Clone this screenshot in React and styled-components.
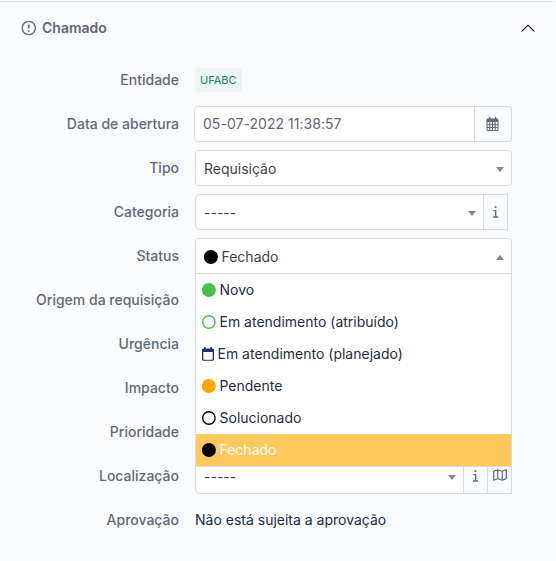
import React from "react";
import styled, { createGlobalStyle } from "styled-components";

const line = "#d9dbde";
const muted = "#626976";

const GlobalStyle = createGlobalStyle`
  * { box-sizing: border-box; }
  body {
    margin: 0;
    background: #fafbfd;
    color: #232e42;
    font: 400 14px/20px Inter, "Noto Sans", sans-serif;
  }
  svg { display: block; flex: none; }
`;

const Panel = styled.section`
  height: 561px;
  padding-top: 1px;
  overflow: hidden;
`;

const Header = styled.header`
  display: flex;
  align-items: center;
  width: 555px;
  height: 53px;
  padding: 0 19px 0 21px;
  border-top: 1px solid #e3e5e7;
  color: ${muted};
`;

const Title = styled.h2`
  flex: 1;
  margin: -1px 0 0 5px;
  font-size: 14px;
  line-height: 20px;
  font-weight: 600;
`;

const Form = styled.div`
  display: flex;
  flex-direction: column;
  gap: 8px;
  padding-top: 8px;
`;

const Row = styled.div`
  display: grid;
  grid-template-columns: 179px 317px;
  column-gap: 16px;
  align-items: center;
  height: 36px;
`;

const Label = styled.label`
  color: ${muted};
  font-weight: 500;
  text-align: right;
  white-space: nowrap;
`;

const Badge = styled.span`
  justify-self: start;
  height: 24px;
  padding: 0 5px;
  border-radius: 4px;
  background: #edf4f4;
  color: #14855c;
  font-size: 11px;
  line-height: 24px;
`;

const Group = styled.div`
  display: flex;
  height: 36px;
  margin-left: ${(p) => (p.$wide ? "-1px" : "0")};
  width: ${(p) => p.$width || "auto"};
`;

const DateField = styled.div`
  flex: 1;
  padding: 7px 8px;
  border: 1px solid ${line};
  border-radius: 4px 0 0 4px;
  background: #fff;
  color: ${muted};
  letter-spacing: 0.04px;
`;

const Addon = styled.span`
  display: flex;
  align-items: center;
  justify-content: center;
  width: ${(p) => p.$width || 25}px;
  border: 1px solid ${line};
  margin-left: -1px;
  border-radius: ${(p) => (p.$rounded ? "0 4px 4px 0" : "0")};
  color: ${muted};
`;

const Select = styled.div`
  position: relative;
  display: flex;
  flex: 1;
  align-items: center;
  height: 36px;
  padding: 1px 7px 0 8px;
  border: 1px solid ${line};
  border-radius: ${(p) => (p.$open ? "4px 4px 0 0" : p.$joined ? "4px 0 0 4px" : "4px")};
  background: #fff;
  color: #444;
`;

const Value = styled.span`
  display: flex;
  align-items: center;
  flex: 1;
  gap: 3.5px;
`;

const Arrow = styled.span`
  margin-top: 2px;
  border: solid transparent;
  border-width: ${(p) => (p.$up ? "0 4px 5px" : "5px 4px 0")};
  border-color: ${(p) => (p.$up ? "transparent transparent #888" : "#888 transparent transparent")};
`;

const Menu = styled.ul`
  position: absolute;
  z-index: 2;
  top: 34px;
  left: -1px;
  width: 317px;
  margin: 0;
  padding: 0;
  list-style: none;
  background: #fff;
  border: 1px solid ${line};
`;

const Option = styled.li`
  display: flex;
  align-items: center;
  gap: 3.5px;
  height: 32px;
  padding-left: 6px;
  background: ${(p) => (p.$selected ? "#fdc95c" : "#fff")};
  color: ${(p) => (p.$selected ? "#fafbfc" : "#232e42")};
`;

const Dot = ({ color, hollow }) => (
  <svg width="14" height="14" viewBox="0 0 14 14">
    <circle cx="6.9" cy="7" r={hollow ? 6.2 : 7} fill={hollow ? "none" : color} stroke={hollow ? color : "none"} strokeWidth="1.4" />
  </svg>
);

const AlertIcon = () => (
  <svg width="16" height="16" viewBox="0 0 16 16" fill="none" stroke="currentColor" strokeWidth="1.4">
    <circle cx="7.8" cy="8" r="6.6" />
    <path d="M7.8 4.5v4M7.8 10.2v1.5" strokeWidth="1.5" />
  </svg>
);

const ChevronIcon = () => (
  <svg width="16" height="16" viewBox="0 0 16 16" fill="none" stroke="#111" strokeWidth="1.1" strokeLinecap="round" strokeLinejoin="round">
    <path d="M2 11.2l6-6 6 6" />
  </svg>
);

const CalendarIcon = () => (
  <svg width="14" height="14" viewBox="0 0 14 14" fill="none" stroke="currentColor">
    <path d="M.5 5V3.2C.5 2.3 1.200 1.600 2 1.600h9c.8 0 1.500.7 1.500 1.600V5z" fill="currentColor" stroke="none" />
    <path d="M3.500 0v2.500M9.500 0v2.500" strokeWidth="1.4" />
    <path d="M1 4.500v8c0 .6.4 1 1 1h9c.6 0 1-.4 1-1v-8M3.800 5v8.500M6.500 5v8.500M9.200 5v8.500M1 7.800h11M1 10.500h11" strokeWidth="1.05" />
  </svg>
);

const PlannedIcon = () => (
  <svg width="12" height="14" viewBox="0 0 12 14" fill="#1b2f62">
    <path fillRule="evenodd" d="M2.2 0h1.5v1.5h4.6V0h1.5v1.5h.7c.8 0 1.5.7 1.5 1.5v9.3c0 .9-.7 1.5-1.5 1.5h-9A1.5 1.5 0 0 1 0 12.3V3c0-.8.7-1.5 1.5-1.5h.7zM1.3 5v7.2c0 .3.2.5.5.5h8.4c.3 0 .5-.2.5-.5V5z" />
  </svg>
);

const InfoIcon = () => (
  <svg width="6" height="12" viewBox="0 0 6 12" fill="none" stroke="currentColor" strokeWidth="1.3">
    <path d="M.4 4.600h2.300v6.400M.1 11h5" />
    <path d="M1.700 1.100h1.700" strokeWidth="1.8" />
  </svg>
);

const MapIcon = () => (
  <svg width="14" height="12" viewBox="0 0 14 12" fill="none" stroke="currentColor" strokeWidth="1.2" strokeLinejoin="round">
    <path d="M.7 2.3L4.7.8l4.6 1.5 4-1.6v8.9l-4 1.6-4.6-1.5-4 1.5zM4.7.8v8.9M9.3 2.3v8.9" />
  </svg>
);

const MapOffset = styled.span`
  margin-top: -3px;
`;

const options = [
  ["Novo", <Dot color="#49bf4d" />],
  ["Em atendimento (atribuído)", <Dot color="#49bf4d" hollow />],
  ["Em atendimento (planejado)", <PlannedIcon />],
  ["Pendente", <Dot color="#ffa500" />],
  ["Solucionado", <Dot color="#000" hollow />],
  ["Fechado", <Dot color="#000" />],
];

const SelectBox = ({ children, open, joined }) => (
  <Select $open={open} $joined={joined}>
    <Value>{children}</Value>
    <Arrow $up={open} />
    {open && (
      <Menu>
        {options.map(([name, icon]) => (
          <Option key={name} $selected={name === "Fechado"}>{icon}{name}</Option>
        ))}
      </Menu>
    )}
  </Select>
);

const Field = ({ label, children }) => (
  <Row><Label>{label}</Label>{children}</Row>
);

export default function App() {
  return (
    <>
      <GlobalStyle />
      <Panel>
        <Header><AlertIcon /><Title>Chamado</Title><ChevronIcon /></Header>
        <Form>
          <Field label="Entidade"><Badge>UFABC</Badge></Field>
          <Field label="Data de abertura">
            <Group $wide>
              <DateField>05-07-2022 11:38:57</DateField>
              <Addon $width={38} $rounded><CalendarIcon /></Addon>
            </Group>
          </Field>
          <Field label="Tipo"><SelectBox>Requisição</SelectBox></Field>
          <Field label="Categoria">
            <Group $width="313px"><SelectBox joined>-----</SelectBox><Addon><InfoIcon /></Addon></Group>
          </Field>
          <Field label="Status"><SelectBox open><Dot color="#000" />Fechado</SelectBox></Field>
          <Field label="Origem da requisição" />
          <Field label="Urgência" />
          <Field label="Impacto" />
          <Field label="Prioridade" />
          <Field label="Localização">
            <Group>
              <SelectBox joined>-----</SelectBox>
              <Addon><InfoIcon /></Addon>
              <Addon><MapOffset><MapIcon /></MapOffset></Addon>
            </Group>
          </Field>
          <Field label="Aprovação"><span>Não está sujeita a aprovação</span></Field>
        </Form>
      </Panel>
    </>
  );
}
